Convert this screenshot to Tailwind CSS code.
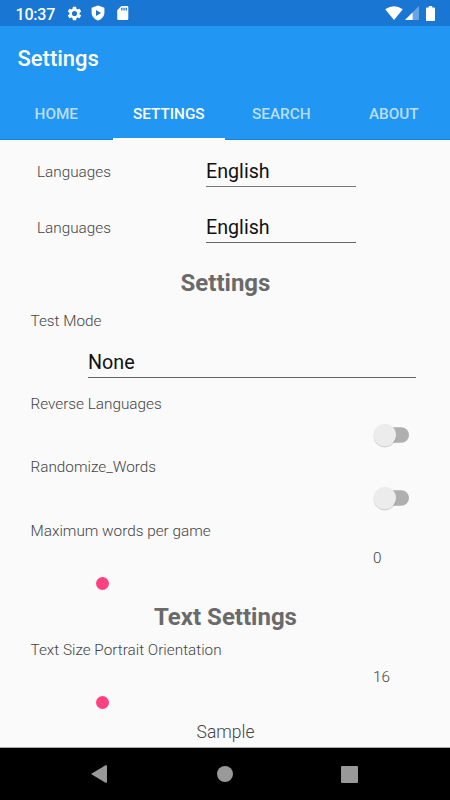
<!DOCTYPE html>
<html lang="en">
<head>
<meta charset="utf-8">
<title>Settings</title>
<script src="https://cdn.jsdelivr.net/npm/@tailwindcss/browser@4"></script>
</head>
<body class="w-[450px] h-[800px] overflow-hidden bg-[#fafafa] font-['Roboto',sans-serif] font-light text-[15.3px] leading-5 text-[#444] flex flex-col">
  <header class="bg-[#2196f3] text-white shrink-0">
    <div class="h-[26px] bg-[#1976d2] flex items-center pl-[15.5px] pr-[15px]">
      <span class="text-[16px] font-medium w-[50px] pt-[3px] leading-5 tracking-[-0.2px]">10:37</span>
      <svg class="w-[17px] h-[17px]" viewBox="0 0 24 24" fill="white"><path d="M19.14 12.94c.04-.3.06-.61.06-.94 0-.32-.02-.64-.07-.94l2.03-1.58a.5.5 0 0 0 .12-.61l-1.92-3.32a.5.5 0 0 0-.59-.22l-2.39.96c-.5-.38-1.03-.7-1.62-.94l-.36-2.54A.48.48 0 0 0 13.92 2.4h-3.84a.48.48 0 0 0-.47.41l-.36 2.54c-.59.24-1.13.57-1.62.94l-2.39-.96a.49.49 0 0 0-.59.22L2.74 8.87a.48.48 0 0 0 .12.61l2.03 1.58c-.05.3-.09.63-.09.94s.02.64.07.94l-2.03 1.58a.5.5 0 0 0-.12.61l1.92 3.32c.12.22.37.29.59.22l2.39-.96c.5.38 1.03.7 1.62.94l.36 2.54c.05.24.24.41.48.41h3.84c.24 0 .44-.17.47-.41l.36-2.54c.59-.24 1.13-.56 1.62-.94l2.39.96c.22.08.47 0 .59-.22l1.92-3.32a.5.5 0 0 0-.12-.61zM12 15.6a3.6 3.6 0 1 1 0-7.2 3.6 3.6 0 0 1 0 7.2"/></svg>
      <svg class="w-[14px] h-[16px] ml-[8.5px]" viewBox="0 0 14 16"><path fill="white" d="M7 .4 13.4 2.7v5c0 3.4-2.4 6.300-6.400 7.900C3 14 .6 11.100.6 7.700v-5z"/><path fill="#1976d2" d="M5 5v6l5-3z"/></svg>
      <svg class="w-[12px] h-[14px] ml-[12px]" viewBox="0 0 12 14"><path fill="white" d="M4.300 0H10a1.300 1.300 0 0 1 1.300 1.300v11.400A1.300 1.300 0 0 1 10 14H1.500A1.300 1.300 0 0 1 .2 12.700V4.200z"/><path fill="#1976d2" d="M4.200 1.800h1.300v2.700H4.200zm2.200 0h1.300v2.700H6.400zm2.200 0h1.300v2.700H8.600z"/></svg>
      <svg class="w-[18px] h-[14px] ml-auto" viewBox="0 0 18 14"><path fill="white" d="M.2 3.300Q9-3 17.800 3.300L9 14z"/></svg>
      <svg class="w-[14px] h-[14px] ml-[1.5px]" viewBox="0 0 14 14"><path fill="white" fill-opacity=".35" d="M0 14 14 0v14z"/><path fill="white" d="M0 14 7.600 6.400V14z"/></svg>
      <svg class="w-[9px] h-[15px] ml-[7.500px]" viewBox="0 0 9 15"><path fill="white" d="M2.800 0h3.400v1.400h2c.5 0 .8.300.8.800v12c0 .5-.3.800-.8.800H.8c-.5 0-.8-.3-.8-.8v-12c0-.5.3-.8.8-.8h2z"/></svg>
    </div>
    <h1 class="h-[63px] flex items-center pl-[17.5px] pt-[2px] text-[22px] font-medium">Settings</h1>
    <nav class="h-[51px] grid grid-cols-4 text-[15.3px] font-medium text-white/70 text-center leading-5 border-b border-[#1585e0] *:pt-[15px] *:h-[51px] pb-0">
      <a>HOME</a>
      <a class="text-white border-b-2 border-white">SETTINGS</a>
      <a>SEARCH</a>
      <a>ABOUT</a>
    </nav>
  </header>

  <main class="h-[608px] shrink-0 pt-[4px] border-b border-[#aaa]">
    <div class="h-[56px] flex pl-[37px]">
      <span class="w-[169px] pt-[18px]">Languages</span>
      <div class="w-[150px] h-[43px] border-b border-[#777] pt-[16px] text-[19.7px] leading-6 font-normal text-[#111]">English</div>
    </div>
    <div class="h-[56px] flex pl-[37px]">
      <span class="w-[169px] pt-[18px]">Languages</span>
      <div class="w-[150px] h-[43px] border-b border-[#666] pt-[16px] text-[19.7px] leading-6 font-normal text-[#111]">English</div>
    </div>
    <h2 class="h-[54px] flex items-center justify-center text-[24px] font-bold text-[#6a6a6a] pl-[1px]">Settings</h2>
    <div class="h-[84px] pl-[30.5px] pt-[1px]">
      <div class="h-[31px]">Test Mode</div>
      <div class="ml-[57.5px] w-[328px] h-[36px] border-b border-[#666] pt-[9px] text-[19.7px] leading-6 font-normal text-[#111]">None</div>
    </div>
    <div class="h-[63px] pl-[30.5px]">
      <div class="h-[30px]">Reverse Languages</div>
      <svg class="ml-[341px] w-[40px] h-[28px]" viewBox="0 0 40 28"><rect x="6" y="3.3" width="31" height="15.5" rx="7.75" fill="#afafaf"/><circle cx="12.8" cy="12.2" r="11.2" fill="#000" opacity=".17"/><circle cx="12.8" cy="11" r="11.2" fill="#ececec"/></svg>
    </div>
    <div class="h-[63px] pl-[30.5px]">
      <div class="h-[30px]">Randomize_Words</div>
      <svg class="ml-[341px] w-[40px] h-[28px]" viewBox="0 0 40 28"><rect x="6" y="3.3" width="31" height="15.5" rx="7.75" fill="#afafaf"/><circle cx="12.8" cy="12.2" r="11.2" fill="#000" opacity=".17"/><circle cx="12.8" cy="11" r="11.2" fill="#ececec"/></svg>
    </div>
    <div class="h-[70px] pl-[30.5px] pt-[1px]">
      <div class="h-[27px]">Maximum words per game</div>
      <div class="pl-[342.500px]">0</div>
      <div class="ml-[65px] mt-[8.500px] size-[13px] rounded-full bg-[#ff4081]"></div>
    </div>
    <h2 class="h-[50px] flex items-center justify-center text-[24px] font-bold text-[#6a6a6a] pt-[4px] pl-[1px]">Text Settings</h2>
    <div class="h-[82px] pl-[30.5px]">
      <div class="h-[27px]">Text Size Portrait Orientation</div>
      <div class="pl-[342.500px]">16</div>
      <div class="ml-[65px] mt-[9px] size-[13px] rounded-full bg-[#ff4081]"></div>
    </div>
    <div class="text-center text-[17.5px] pl-[1px]">Sample</div>
  </main>

  <footer class="h-[52px] bg-black shrink-0 flex items-center">
    <svg class="ml-[91px] w-[16px] h-[18px]" viewBox="0 0 16 18"><path fill="#999" d="M0 9 14.5.3Q16-.2 16 1v16q0 1.200-1.500.7z"/></svg>
    <div class="ml-[110px] size-[16px] rounded-full bg-[#999]"></div>
    <div class="ml-[107.500px] size-[17px] rounded-[1px] bg-[#999]"></div>
  </footer>
</body>
</html>
